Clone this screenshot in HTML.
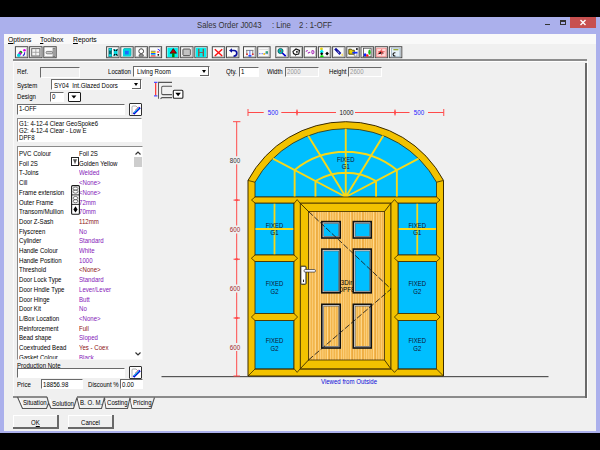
<!DOCTYPE html>
<html><head><meta charset="utf-8">
<style>
*{margin:0;padding:0;box-sizing:border-box}
html,body{width:600px;height:450px;overflow:hidden;background:#000}
body{position:relative;font-family:"Liberation Sans",sans-serif;font-size:7.5px;color:#000}
.a{position:absolute}
.t{position:absolute;white-space:nowrap;line-height:1;margin-top:-0.7px;transform:scaleX(0.81);transform-origin:0 0}
.sunk{position:absolute;background:#fff;border-top:1.3px solid #6a6a6a;border-left:1.3px solid #6a6a6a;border-right:1px solid #fff;border-bottom:1px solid #fff}
.dis{background:#f0f0f0}
.dd{position:absolute;background:#fcfcfc;border-right:1.5px solid #606060;border-bottom:1.5px solid #606060}
.dd:after{content:"";position:absolute;left:50%;top:50%;margin-left:-2.5px;margin-top:-1px;border-left:2.2px solid transparent;border-right:2.2px solid transparent;border-top:3px solid #000}
.btn{position:absolute;background:#f0f0f0;border-right:2px solid #696969;border-bottom:2px solid #696969;box-shadow:inset 1px 1px 0 #fff}
.pu{color:#8418b8}
.rd{color:#8c1414}
</style></head><body>
<div class="a" style="left:0;top:17px;width:600px;height:416px;background:#abb0ec"></div>
<div class="t" style="left:196.5px;top:22px;font-size:8.6px;color:#333;transform:scaleX(0.9)">Sales Order J0043</div>
<div class="t" style="left:272px;top:22px;font-size:8.6px;color:#333;transform:scaleX(0.9)">: Line</div>
<div class="t" style="left:298.5px;top:22px;font-size:8.6px;color:#333;transform:scaleX(0.9)">2 : 1-OFF</div>
<div class="a" style="left:545px;top:24px;width:5px;height:1px;background:#333"></div>
<div class="a" style="left:560px;top:20px;width:6px;height:5px;border:1px solid #333;border-top-width:2px"></div>
<div class="a" style="left:570px;top:17px;width:26px;height:11px;background:#c75050"></div>
<svg class="a" style="left:570px;top:17px" width="26" height="11"><path d="M10.5,3 L15.5,8 M15.5,3 L10.5,8" stroke="#fff" stroke-width="1.4"/></svg>
<div class="a" style="left:4px;top:34px;width:592px;height:397px;background:#f0f0f0"></div>
<div class="a" style="left:4px;top:34px;width:592px;height:10px;background:#f9f9f9"></div>
<div class="t" style="left:8px;top:37px;transform:scaleX(0.9)"><u>O</u>ptions</div>
<div class="t" style="left:40px;top:37px;transform:scaleX(0.9)"><u>T</u>oolbox</div>
<div class="t" style="left:72.5px;top:37px;transform:scaleX(0.9)"><u>R</u>eports</div>
<div class="a" style="left:13px;top:59px;width:574px;height:2px;background:#8c8c8c"></div>
<div class="a" style="left:13px;top:61px;width:572px;height:1px;background:#fff"></div>
<div class="a" style="left:13px;top:61px;width:1px;height:336px;background:#fafafa"></div>
<div class="a" style="left:585px;top:63px;width:2px;height:335px;background:#6a6a6a"></div>
<div class="a" style="left:587px;top:61px;width:1px;height:338px;background:#fff"></div>
<svg class="a" style="left:0;top:0" width="600" height="62"><rect x="15.40" y="46.7" width="12.4" height="11" fill="#fbfbfb" stroke="#4a4a4a" stroke-width="1"/><path d="M16.40,56.7 H26.80 V47.7" stroke="#a8a8a8" stroke-width="0.8" fill="none"/><rect x="29.60" y="46.7" width="12.4" height="11" fill="#fbfbfb" stroke="#4a4a4a" stroke-width="1"/><path d="M30.60,56.7 H41.00 V47.7" stroke="#a8a8a8" stroke-width="0.8" fill="none"/><rect x="43.80" y="46.7" width="12.4" height="11" fill="#fbfbfb" stroke="#4a4a4a" stroke-width="1"/><path d="M44.80,56.7 H55.20 V47.7" stroke="#a8a8a8" stroke-width="0.8" fill="none"/><rect x="106.60" y="46.7" width="12.4" height="11" fill="#fbfbfb" stroke="#4a4a4a" stroke-width="1"/><path d="M107.60,56.7 H118.00 V47.7" stroke="#a8a8a8" stroke-width="0.8" fill="none"/><rect x="120.80" y="46.7" width="12.4" height="11" fill="#fbfbfb" stroke="#4a4a4a" stroke-width="1"/><path d="M121.80,56.7 H132.20 V47.7" stroke="#a8a8a8" stroke-width="0.8" fill="none"/><rect x="135.00" y="46.7" width="12.4" height="11" fill="#fbfbfb" stroke="#4a4a4a" stroke-width="1"/><path d="M136.00,56.7 H146.40 V47.7" stroke="#a8a8a8" stroke-width="0.8" fill="none"/><rect x="149.20" y="46.7" width="12.4" height="11" fill="#fbfbfb" stroke="#4a4a4a" stroke-width="1"/><path d="M150.20,56.7 H160.60 V47.7" stroke="#a8a8a8" stroke-width="0.8" fill="none"/><rect x="166.40" y="46.7" width="12.4" height="11" fill="#fbfbfb" stroke="#4a4a4a" stroke-width="1"/><path d="M167.40,56.7 H177.80 V47.7" stroke="#a8a8a8" stroke-width="0.8" fill="none"/><rect x="180.60" y="46.7" width="12.4" height="11" fill="#fbfbfb" stroke="#4a4a4a" stroke-width="1"/><path d="M181.60,56.7 H192.00 V47.7" stroke="#a8a8a8" stroke-width="0.8" fill="none"/><rect x="194.80" y="46.7" width="12.4" height="11" fill="#fbfbfb" stroke="#4a4a4a" stroke-width="1"/><path d="M195.80,56.7 H206.20 V47.7" stroke="#a8a8a8" stroke-width="0.8" fill="none"/><rect x="212.30" y="46.7" width="12.4" height="11" fill="#fbfbfb" stroke="#4a4a4a" stroke-width="1"/><path d="M213.30,56.7 H223.70 V47.7" stroke="#a8a8a8" stroke-width="0.8" fill="none"/><rect x="226.50" y="46.7" width="12.4" height="11" fill="#fbfbfb" stroke="#4a4a4a" stroke-width="1"/><path d="M227.50,56.7 H237.90 V47.7" stroke="#a8a8a8" stroke-width="0.8" fill="none"/><rect x="243.50" y="46.7" width="12.4" height="11" fill="#fbfbfb" stroke="#4a4a4a" stroke-width="1"/><path d="M244.50,56.7 H254.90 V47.7" stroke="#a8a8a8" stroke-width="0.8" fill="none"/><rect x="257.70" y="46.7" width="12.4" height="11" fill="#fbfbfb" stroke="#4a4a4a" stroke-width="1"/><path d="M258.70,56.7 H269.10 V47.7" stroke="#a8a8a8" stroke-width="0.8" fill="none"/><rect x="275.80" y="46.7" width="12.4" height="11" fill="#fbfbfb" stroke="#4a4a4a" stroke-width="1"/><path d="M276.80,56.7 H287.20 V47.7" stroke="#a8a8a8" stroke-width="0.8" fill="none"/><rect x="290.00" y="46.7" width="12.4" height="11" fill="#fbfbfb" stroke="#4a4a4a" stroke-width="1"/><path d="M291.00,56.7 H301.40 V47.7" stroke="#a8a8a8" stroke-width="0.8" fill="none"/><rect x="304.20" y="46.7" width="12.4" height="11" fill="#fbfbfb" stroke="#4a4a4a" stroke-width="1"/><path d="M305.20,56.7 H315.60 V47.7" stroke="#a8a8a8" stroke-width="0.8" fill="none"/><rect x="318.40" y="46.7" width="12.4" height="11" fill="#fbfbfb" stroke="#4a4a4a" stroke-width="1"/><path d="M319.40,56.7 H329.80 V47.7" stroke="#a8a8a8" stroke-width="0.8" fill="none"/><rect x="332.60" y="46.7" width="12.4" height="11" fill="#fbfbfb" stroke="#4a4a4a" stroke-width="1"/><path d="M333.60,56.7 H344.00 V47.7" stroke="#a8a8a8" stroke-width="0.8" fill="none"/><rect x="346.80" y="46.7" width="12.4" height="11" fill="#fbfbfb" stroke="#4a4a4a" stroke-width="1"/><path d="M347.80,56.7 H358.20 V47.7" stroke="#a8a8a8" stroke-width="0.8" fill="none"/><rect x="361.00" y="46.7" width="12.4" height="11" fill="#fbfbfb" stroke="#4a4a4a" stroke-width="1"/><path d="M362.00,56.7 H372.40 V47.7" stroke="#a8a8a8" stroke-width="0.8" fill="none"/><rect x="375.20" y="46.7" width="12.4" height="11" fill="#fbfbfb" stroke="#4a4a4a" stroke-width="1"/><path d="M376.20,56.7 H386.60 V47.7" stroke="#a8a8a8" stroke-width="0.8" fill="none"/><rect x="389.40" y="46.7" width="12.4" height="11" fill="#fbfbfb" stroke="#4a4a4a" stroke-width="1"/><path d="M390.40,56.7 H400.80 V47.7" stroke="#a8a8a8" stroke-width="0.8" fill="none"/><g transform="translate(14.9,46.2)"><circle cx="5.8" cy="6" r="1.5" fill="#00a000"/><circle cx="5" cy="7.4" r="1.6" fill="#d000d0"/><circle cx="3.8" cy="9" r="1.7" fill="#00d8e8"/><circle cx="9.6" cy="4" r="1.3" fill="#e000e0"/><path d="M9.8,6 Q10,8.5 8,9.5" stroke="#2828d0" stroke-width="1.1" fill="none"/></g><g transform="translate(29.1,46.2)"><rect x="2.6" y="2.4" width="8.2" height="7.4" fill="#f4f4f4" stroke="#6a6a6a" stroke-width="1"/><path d="M6.7,3 V9.3 M3.2,6.1 H10.3" stroke="#9a9a9a" stroke-width="0.8"/></g><g transform="translate(43.3,46.2)"><rect x="2.8" y="5.2" width="6.4" height="2.4" rx="1" fill="#d0d0d0" stroke="#6a6a6a" stroke-width="0.8"/><rect x="9.8" y="2" width="1.8" height="8.5" fill="#cfcfcf" stroke="#6a6a6a" stroke-width="0.8"/></g><g transform="translate(106.1,46.2)"><rect x="2.4" y="1.8" width="3.4" height="8.8" fill="#006a70"/><circle cx="4.1" cy="3.3" r="1.3" fill="#00e0e8"/><circle cx="4.1" cy="9" r="1.3" fill="#00e0e8"/><rect x="7.6" y="3.2" width="3.8" height="6.2" fill="#00d8e0"/><path d="M7.6,3.2 L9,4.6 M11.4,3.2 L10,4.6 M7.6,9.4 L9,8 M11.4,9.4 L10,8" stroke="#000" stroke-width="1.2"/></g><g transform="translate(120.3,46.2)"><rect x="2.6" y="2.4" width="8" height="8" rx="1.2" fill="#00d8dc"/><rect x="4.6" y="4.6" width="3.8" height="3.6" fill="#1a6cff"/><path d="M3.6,2.4 H10.6 V9.4" stroke="#00a8a8" stroke-width="0.8" fill="none"/></g><g transform="translate(134.5,46.2)"><circle cx="6.7" cy="5" r="2.4" fill="#fff" stroke="#3a3a3a" stroke-width="0.9"/><path d="M6.7,1.6 V2.4" stroke="#666" stroke-width="0.8"/><path d="M4.6,8.6 Q6.7,7.6 8.8,8.6 V10 H4.6 Z" fill="#aaa" stroke="#444" stroke-width="0.7"/></g><g transform="translate(148.7,46.2)"><rect x="2.2" y="4.6" width="4.6" height="0.9" fill="#555"/><rect x="2.2" y="5.5" width="4.6" height="1.3" fill="#f0e000"/><rect x="2.2" y="6.8" width="4.6" height="1.2" fill="#2050ff"/><rect x="2.2" y="8" width="4.6" height="1.1" fill="#00c8f0"/><rect x="2.2" y="9.1" width="4.6" height="1.2" fill="#ff4040"/><path d="M8.2,5.8 H10.6" stroke="#ff3030" stroke-width="1.3"/><path d="M9,3 Q11.5,3.5 11,5" stroke="#4040ff" stroke-width="1" fill="none"/><circle cx="9.6" cy="8.6" r="0.9" fill="#000"/></g><g transform="translate(165.9,46.2)"><rect x="1.5" y="1.5" width="10.4" height="9.5" fill="#00f0f0"/><path d="M7.4,2.4 L10.6,7 H4.2 Z" fill="#c00000" stroke="#300" stroke-width="0.7"/><rect x="6.2" y="7" width="2.4" height="4" fill="#008000"/></g><g transform="translate(180.1,46.2)"><rect x="2.8" y="2.8" width="7.4" height="6.6" rx="0.8" fill="#bdbdbd" stroke="#444" stroke-width="0.9"/><path d="M5,3.5 V8.8 M7,3.5 V8.8 M9,3.5 V8.8" stroke="#d0d0d0" stroke-width="0.5"/></g><g transform="translate(194.3,46.2)"><rect x="1.5" y="1.5" width="10.4" height="9.5" fill="#00f0f0"/><path d="M4.5,2.5 V10.2 M9,2.5 V10.2" stroke="#a04030" stroke-width="1.2"/><path d="M4.5,6.3 H9" stroke="#806060" stroke-width="1"/></g><g transform="translate(211.8,46.2)"><path d="M3,3 L10.4,9.8 M10.4,3 L3,9.8" stroke="#ff1010" stroke-width="1.4"/></g><g transform="translate(226,46.2)"><path d="M5.5,4.3 H8 Q10.8,4.3 10.8,7 Q10.8,9.8 7.5,10" stroke="#0a10a0" stroke-width="1.6" fill="none"/><path d="M3,4.3 L6,2 V6.6 Z" fill="#0a10a0"/></g><g transform="translate(243,46.2)"><path d="M3,4.2 H10.4 M3.8,4.2 V7.6 M9.8,4.2 V7.6" stroke="#777" stroke-width="0.9"/><path d="M6.9,4.2 V9.2" stroke="#4060ff" stroke-width="0.9"/><circle cx="4" cy="8" r="1" fill="#d03030"/><circle cx="9.8" cy="8" r="1" fill="#d03030"/><ellipse cx="6.9" cy="9.6" rx="1.8" ry="0.9" fill="#2040ff"/></g><g transform="translate(257.2,46.2)"><path d="M2,3.2 H11" stroke="#dcdcdc" stroke-width="1"/><path d="M1.8,7.5 H11" stroke="#6070ff" stroke-width="1" stroke-dasharray="1.5 1"/><circle cx="7" cy="7.8" r="1.1" fill="#f0c020"/><rect x="8.4" y="5" width="2.4" height="2.4" fill="#30a080"/></g><g transform="translate(275.3,46.2)"><circle cx="5.2" cy="4.8" r="2.6" fill="#00c0c0" stroke="#0a4040" stroke-width="0.7"/><circle cx="5.2" cy="4.8" r="0.8" fill="#d02020"/><path d="M7,6.8 L10.4,10" stroke="#0000d0" stroke-width="1.7"/></g><g transform="translate(289.5,46.2)"><path d="M3.5,5.2 L6.5,2.8 L10,4.2 L9.2,7.8 L6,8.4 L4,7.4 Z" fill="#fff" stroke="#111" stroke-width="1.1"/><path d="M6.5,4.5 L9,5.5 L7,7" fill="#111"/><path d="M6,8.4 V10" stroke="#666" stroke-width="0.9"/></g><g transform="translate(303.7,46.2)"><path d="M2.2,5.5 Q3.3,3.8 4,4.8 M4.2,7.2 Q5.5,5.6 6.5,6.4 M8,5 Q9,4 10,5 Q10.8,7 9,7.6 Q8,7 8,5" stroke="#b040c0" stroke-width="1.1" fill="none"/></g><g transform="translate(317.9,46.2)"><ellipse cx="3.6" cy="2.8" rx="1.4" ry="1.4" fill="#f0d000"/><path d="M3.8,3 L5.8,5.5 L3.8,8 L1.8,5.5 Z" fill="#00e8f0"/><path d="M3.8,6 L5.4,7.6 L3.8,9.2 L2.2,7.6 Z" fill="#000"/><ellipse cx="4" cy="10" rx="1.8" ry="1" fill="#00e000"/><path d="M9.2,5.6 L11,7.4 L9.2,9.2 L7.4,7.4 Z" fill="#000"/></g><g transform="translate(332.1,46.2)"><path d="M3,2.5 L8.3,7.8" stroke="#1010a0" stroke-width="2.6"/><path d="M5.5,5.2 L7.2,6.8" stroke="#fff" stroke-width="0.7"/><path d="M8.5,8.8 L10.8,7 L11,10.2 Z" fill="#f8e070"/></g><g transform="translate(346.3,46.2)"><path d="M2.5,3 H5 L6,4 H8 V8 H2.5 Z" fill="#e8d000" stroke="#302800" stroke-width="0.8"/><rect x="6" y="5.6" width="5.2" height="1.8" fill="#1030ff"/><circle cx="10.6" cy="2.8" r="0.9" fill="#000"/><path d="M8,8 V10 H10.5 V8" stroke="#888" stroke-width="0.8" fill="none"/></g><g transform="translate(360.5,46.2)"><rect x="3" y="2" width="7.6" height="8.6" fill="#fff" stroke="#444" stroke-width="0.8"/><ellipse cx="4.6" cy="8.6" rx="1.4" ry="1.6" fill="#1020ff"/><ellipse cx="6.8" cy="9.2" rx="1.2" ry="1.2" fill="#ff1010"/><ellipse cx="9" cy="6" rx="1.2" ry="2.6" fill="#10c010"/></g><g transform="translate(374.7,46.2)"><rect x="2" y="2" width="9.4" height="8.6" fill="#ffd8d8" stroke="#f08080" stroke-width="0.8"/><path d="M3,8 L6,4.5 L9,7 M7,3 V9 M3.5,5.5 H10" stroke="#e85050" stroke-width="0.9"/></g><g transform="translate(388.9,46.2)"><rect x="2.5" y="1.8" width="8.6" height="8.8" fill="#e4f0f8" stroke="#98b0c0" stroke-width="0.8"/><path d="M4.5,3.5 H9.5" stroke="#90a020" stroke-width="1.2"/><path d="M6.5,6.5 Q4,6.3 4.2,8.4 Q4.5,10 6.5,9.8" stroke="#111" stroke-width="1.1" fill="none"/></g></svg>

<div class="t" style="left:17px;top:68.5px">Ref.</div>
<div class="sunk dis" style="left:40px;top:67px;width:40px;height:11px"></div>
<div class="t" style="left:108px;top:68.5px">Location</div>
<div class="sunk" style="left:133px;top:66px;width:77px;height:11px"></div>
<div class="t" style="left:137px;top:68.5px">Living Room</div>
<div class="dd" style="left:200px;top:67px;width:9px;height:9px"></div>
<div class="t" style="left:226px;top:68.5px">Qty.</div>
<div class="sunk" style="left:239px;top:67px;width:20px;height:10px"></div>
<div class="t" style="left:241px;top:68.5px">1</div>
<div class="t" style="left:267px;top:68.5px">Width</div>
<div class="sunk dis" style="left:285px;top:67px;width:34px;height:10px"></div>
<div class="t" style="left:287px;top:68.5px;color:#9a9a9a">2000</div>
<div class="t" style="left:329px;top:68.5px">Height</div>
<div class="sunk dis" style="left:348px;top:67px;width:34px;height:10px"></div>
<div class="t" style="left:350px;top:68.5px;color:#9a9a9a">2600</div>
<div class="t" style="left:17px;top:82.5px">System</div>
<div class="sunk" style="left:51px;top:79px;width:91px;height:11px"></div>
<div class="t" style="left:54px;top:83px">SY04 &nbsp;Int.Glazed Doors</div>
<div class="dd" style="left:132px;top:80px;width:9px;height:9px"></div>
<div class="t" style="left:17px;top:93.5px">Design</div>
<div class="sunk" style="left:50px;top:92px;width:14px;height:10px"></div>
<div class="t" style="left:52px;top:93.5px">0</div>
<div class="a" style="left:68.3px;top:91.7px;width:12.4px;height:10.4px;border:1.4px solid #1a1a1a;border-radius:1px;background:#fff"><svg class="a" style="left:0;top:0" width="10" height="8"><path d="M2.4,2.6 H7.4 L4.9,5.6 Z" fill="#000"/></svg></div>
<div class="sunk" style="left:17px;top:104px;width:108px;height:11px"></div>
<div class="t" style="left:19px;top:106px">1-OFF</div>
<div class="a" style="left:129px;top:103px;width:12.5px;height:13px;border:1px solid #303030;border-radius:1px;background:#fff"><svg class="a" style="left:0;top:0" width="12" height="12"><path d="M2,10.5 V3 Q2,2 3,2 H6 L8,4" stroke="#999" stroke-width="0.8" fill="none"/><path d="M3.5,10 L10,3.5" stroke="#0000e0" stroke-width="2.2"/><path d="M4,9 L9,4" stroke="#00c8c8" stroke-width="1"/><path d="M8.5,2.8 L5,6" stroke="#e07070" stroke-width="0.6"/></svg></div>
<div class="sunk" style="left:17px;top:118.3px;width:125px;height:24px;border-color:#8a8a8a #fff #fff #8a8a8a;border-width:1px"></div>
<div class="t" style="left:19px;top:120.4px;line-height:7.2px">G1: 4-12-4 Clear GeoSpoke6<br>G2: 4-12-4 Clear - Low E<br>DPF8</div>
<div class="sunk" style="left:17px;top:146.2px;width:126px;height:213.5px;overflow:hidden;border-color:#8a8a8a #f8f8f8 #f8f8f8 #8a8a8a;border-width:1px"><div class="t" style="left:0.7px;top:3.50px">PVC Colour</div><div class="t " style="left:61.3px;top:3.50px">Foil 2S</div><div class="t" style="left:0.7px;top:13.20px">Foil 2S</div><div class="t " style="left:61.3px;top:13.20px">Golden Yellow</div><div class="t" style="left:0.7px;top:22.90px">T-Joins</div><div class="t pu" style="left:61.3px;top:22.90px">Welded</div><div class="t" style="left:0.7px;top:32.60px">Cill</div><div class="t pu" style="left:61.3px;top:32.60px">&lt;None&gt;</div><div class="t" style="left:0.7px;top:42.30px">Frame extension</div><div class="t pu" style="left:61.3px;top:42.30px">&lt;None&gt;</div><div class="t" style="left:0.7px;top:52.00px">Outer Frame</div><div class="t pu" style="left:61.3px;top:52.00px">72mm</div><div class="t" style="left:0.7px;top:61.70px">Transom/Mullion</div><div class="t pu" style="left:61.3px;top:61.70px">70mm</div><div class="t" style="left:0.7px;top:71.40px">Door Z-Sash</div><div class="t rd" style="left:61.3px;top:71.40px">112mm</div><div class="t" style="left:0.7px;top:81.10px">Flyscreen</div><div class="t pu" style="left:61.3px;top:81.10px">No</div><div class="t" style="left:0.7px;top:90.80px">Cylinder</div><div class="t pu" style="left:61.3px;top:90.80px">Standard</div><div class="t" style="left:0.7px;top:100.50px">Handle Colour</div><div class="t pu" style="left:61.3px;top:100.50px">White</div><div class="t" style="left:0.7px;top:110.20px">Handle Position</div><div class="t pu" style="left:61.3px;top:110.20px">1000</div><div class="t" style="left:0.7px;top:119.90px">Threshold</div><div class="t rd" style="left:61.3px;top:119.90px">&lt;None&gt;</div><div class="t" style="left:0.7px;top:129.60px">Door Lock Type</div><div class="t pu" style="left:61.3px;top:129.60px">Standard</div><div class="t" style="left:0.7px;top:139.30px">Door Hndle Type</div><div class="t pu" style="left:61.3px;top:139.30px">Lever/Lever</div><div class="t" style="left:0.7px;top:149.00px">Door Hinge</div><div class="t pu" style="left:61.3px;top:149.00px">Butt</div><div class="t" style="left:0.7px;top:158.70px">Door Kit</div><div class="t pu" style="left:61.3px;top:158.70px">No</div><div class="t" style="left:0.7px;top:168.40px">L/Box Location</div><div class="t pu" style="left:61.3px;top:168.40px">&lt;None&gt;</div><div class="t" style="left:0.7px;top:178.10px">Reinforcement</div><div class="t rd" style="left:61.3px;top:178.10px">Full</div><div class="t" style="left:0.7px;top:187.80px">Bead shape</div><div class="t pu" style="left:61.3px;top:187.80px">Sloped</div><div class="t" style="left:0.7px;top:197.50px">Coextruded Bead</div><div class="t rd" style="left:61.3px;top:197.50px">Yes - Coex</div><div class="t" style="left:0.7px;top:207.20px">Gasket Colour</div><div class="t pu" style="left:61.3px;top:207.20px">Black</div><div class="a" style="left:53px;top:9.5px;width:8px;height:9.5px;border:1px solid #222;background:#fff"><div class="a" style="left:1px;top:1.5px;width:4px;height:5px;background:#555;clip-path:polygon(0 0,100% 0,50% 100%)"></div></div><svg class="a" style="left:53px;top:38px" width="9" height="30"><rect x="0.6" y="0.6" width="7.8" height="28.6" rx="1" fill="#fff" stroke="#1a1a1a" stroke-width="1.1"/><path d="M0.6,9.9 H8.4 M0.6,19.4 H8.4" stroke="#1a1a1a" stroke-width="0.9"/><ellipse cx="4.5" cy="3.6" rx="2.4" ry="1.6" fill="none" stroke="#555" stroke-width="0.8"/><ellipse cx="4.5" cy="6.6" rx="2.4" ry="1.6" fill="none" stroke="#555" stroke-width="0.8"/><ellipse cx="4.5" cy="13.1" rx="2.4" ry="1.6" fill="none" stroke="#555" stroke-width="0.8"/><ellipse cx="4.5" cy="16.2" rx="2.4" ry="1.6" fill="none" stroke="#555" stroke-width="0.8"/><path d="M4.5,21.3 L6.6,24.4 L4.5,27.5 L2.4,24.4 Z" fill="#000"/></svg><div class="a" style="left:115px;top:0;width:10px;height:212px;background:#fff"></div><div class="a" style="left:116px;top:10px;width:9px;height:10px;background:#cdcdcd"></div><svg class="a" style="left:115px;top:2px" width="10" height="8"><path d="M2.5 5.5 L5 3 L7.5 5.5" stroke="#333" stroke-width="1.2" fill="none"/></svg><svg class="a" style="left:115px;top:203px" width="10" height="8"><path d="M2.5 2.5 L5 5 L7.5 2.5" stroke="#333" stroke-width="1.2" fill="none"/></svg></div>
<div class="t" style="left:17px;top:362.5px"><u>Production Note</u></div>
<div class="sunk" style="left:17px;top:368px;width:108px;height:10px"></div>
<div class="a" style="left:128.5px;top:366px;width:13px;height:12.5px;border:1px solid #303030;border-radius:1px;background:#fff"><svg class="a" style="left:0;top:0" width="12" height="12"><path d="M2,10.5 V3 Q2,2 3,2 H6 L8,4" stroke="#999" stroke-width="0.8" fill="none"/><path d="M3.5,10 L10,3.5" stroke="#0000e0" stroke-width="2.2"/><path d="M4,9 L9,4" stroke="#00c8c8" stroke-width="1"/><path d="M8.5,2.8 L5,6" stroke="#e07070" stroke-width="0.6"/></svg></div>
<div class="t" style="left:17px;top:382px">Price</div>
<div class="sunk" style="left:41px;top:379px;width:42px;height:10px"></div>
<div class="t" style="left:43px;top:382px">18856.98</div>
<div class="t" style="left:88px;top:382px">Discount %</div>
<div class="sunk" style="left:120px;top:379px;width:23px;height:10px"></div>
<div class="t" style="left:122px;top:382px">0.00</div>

<svg class="a" style="left:0;top:0" width="600" height="450">
<path d="M13,396.9 H47 M77,396.9 H587" stroke="#6a6a6a" stroke-width="1.5"/>
<path d="M17.5,397 L22.5,408.5 H46.5 L48.6,403 M48.6,403 L51,408.5 H73.5 L77,397.5 M77,397.5 L79.5,408.5 H101.5 L104.5,397.5 L106,408.5 H127.5 L130,397.5 L132,408.5 H151 L154.5,397.5" stroke="#555" stroke-width="1.1" fill="none"/>
<path d="M48.6,403 L47,397" stroke="#555" stroke-width="1.1"/>
<path d="M19.5,398.5 L23.5,407.5 M50,399 L52,407.5 M78.5,399 L81,407.5 M105.5,400 L107,407.5 M131,400 L133,407.5" stroke="#fff" stroke-width="0.9"/>
</svg>
<div class="t" style="left:22.5px;top:400px">Situation</div>
<div class="t" style="left:52px;top:400.5px">Solution</div>
<div class="t" style="left:79.5px;top:400px">B. O. M.</div>
<div class="t" style="left:106.5px;top:400px">Costing</div>
<div class="t" style="left:132.5px;top:400px">Pricing</div>
<div class="btn" style="left:13px;top:415px;width:46px;height:14px"></div>
<div class="t" style="left:31px;top:420px">O<u>K</u></div>
<div class="btn" style="left:68px;top:415px;width:46px;height:14px"></div>
<div class="t" style="left:81px;top:420px">Cancel</div>

<svg class="a" style="left:0;top:0" width="600" height="450"><defs><pattern id="wood" x="0" y="0" width="23" height="60" patternUnits="userSpaceOnUse"><rect width="23" height="60" fill="#f3b64c"/><rect x="0.5" width="0.8" height="60" fill="#ffd98e"/><rect x="2.8" width="0.6" height="60" fill="#ffd98e"/><rect x="5" width="1" height="60" fill="#ffd98e"/><rect x="8.2" width="0.7" height="60" fill="#ffd98e"/><rect x="10.5" width="0.9" height="60" fill="#ffd98e"/><rect x="13" width="0.6" height="60" fill="#ffd98e"/><rect x="15.8" width="1.1" height="60" fill="#ffd98e"/><rect x="19" width="0.7" height="60" fill="#ffd98e"/><rect x="21.3" width="0.8" height="60" fill="#ffd98e"/><rect x="7" width="0.8" height="60" fill="#e9a63e"/><rect x="17.5" width="0.8" height="60" fill="#e9a63e"/></pattern></defs><rect x="161.5" y="376" width="387" height="1.2" fill="#555"/><path d="M248,376 V180.44 A110.7,110.7 0 0 1 443.5,180.44 V376 Z" fill="#f2c200" stroke="#3a2a00" stroke-width="1"/><path d="M255,197 V182.22 A103.7,103.7 0 0 1 436.5,182.22 V197 Z" fill="#00bfff" stroke="#3a2a00" stroke-width="0.8"/><path d="M248,180.44 L255,182.22 M443.5,180.44 L436.5,182.22" stroke="#3a2a00" stroke-width="0.8"/><path d="M345.75,197 L272.94,158.56 M345.75,197 L308.25,135.72 M345.75,197 L345.75,128.70 M345.75,197 L383.25,135.72 M345.75,197 L418.56,158.56 M294.64,170.01 A80.65,80.65 0 0 1 396.86,170.01 M294.64,170.01 V197 M396.86,170.01 V197 M315.46,181.01 A59.65,59.65 0 0 1 376.04,181.01 M315.46,181.01 V197 M376.04,181.01 V197" stroke="#f6d81a" stroke-width="1.9" fill="none"/><rect x="255" y="203" width="39" height="52" fill="#00bfff" stroke="#3a2a00" stroke-width="0.8"/><rect x="255" y="261.5" width="39" height="52.0" fill="#00bfff" stroke="#3a2a00" stroke-width="0.8"/><rect x="255" y="320.5" width="39" height="48.5" fill="#00bfff" stroke="#3a2a00" stroke-width="0.8"/><path d="M274.5,203.5 V254.5 M255.5,229 H293.5" stroke="#f6d81a" stroke-width="1.8"/><rect x="398" y="203" width="38.5" height="52" fill="#00bfff" stroke="#3a2a00" stroke-width="0.8"/><rect x="398" y="261.5" width="38.5" height="52.0" fill="#00bfff" stroke="#3a2a00" stroke-width="0.8"/><rect x="398" y="320.5" width="38.5" height="48.5" fill="#00bfff" stroke="#3a2a00" stroke-width="0.8"/><path d="M417.25,203.5 V254.5 M398.5,229 H436.0" stroke="#f6d81a" stroke-width="1.8"/><path d="M300,203 H391 V369 H300 Z" fill="#f2c200" stroke="#3a2a00" stroke-width="0.8"/><rect x="308.5" y="211.5" width="76" height="148.5" fill="url(#wood)" stroke="#3a2a00" stroke-width="0.8"/><path d="M300,203 L308.5,211.5 M391,203 L384.5,211.5 M300,369 L308.5,360 M391,369 L384.5,360" stroke="#3a2a00" stroke-width="0.9"/><path d="M251.5,200 L255,197 H436.5 L440,200 L436.5,203 H255 Z" fill="#f2c200" stroke="#3a2a00" stroke-width="0.8"/><path d="M248,376 L255,369 H436.5 L443.5,376" fill="none" stroke="#3a2a00" stroke-width="0.8"/><path d="M294,203 L297.15,199.6 L300.3,203 V369 L297.15,372.4 L294,369 Z" fill="#f2c200" stroke="none"/><path d="M294,203.5 L297.15,199.6 L300.3,203.5 M294,203 V369 M300.3,203 V369 M294,368.6 L297.15,372.4 L300.3,368.6" fill="none" stroke="#3a2a00" stroke-width="0.8"/><path d="M391,203 L394.5,199.6 L398,203 V369 L394.5,372.4 L391,369 Z" fill="#f2c200" stroke="none"/><path d="M391,203.5 L394.5,199.6 L398,203.5 M391,203 V369 M398,203 V369 M391,368.6 L394.5,372.4 L398,368.6" fill="none" stroke="#3a2a00" stroke-width="0.8"/><path d="M251.4,258.25 L255,255 H294 L297.6,258.25 L294,261.5 H255 Z" fill="#f2c200" stroke="#3a2a00" stroke-width="0.8"/><path d="M251.4,317.0 L255,313.5 H294 L297.6,317.0 L294,320.5 H255 Z" fill="#f2c200" stroke="#3a2a00" stroke-width="0.8"/><path d="M394.4,258.25 L398,255 H436.5 L440.1,258.25 L436.5,261.5 H398 Z" fill="#f2c200" stroke="#3a2a00" stroke-width="0.8"/><path d="M394.4,317.0 L398,313.5 H436.5 L440.1,317.0 L436.5,320.5 H398 Z" fill="#f2c200" stroke="#3a2a00" stroke-width="0.8"/><text transform="translate(346.5,284.6) scale(0.82,1)" font-size="7.6" text-anchor="middle" fill="#000" font-family="Liberation Sans" >3Dir</text><text transform="translate(346.5,292) scale(0.82,1)" font-size="7.6" text-anchor="middle" fill="#000" font-family="Liberation Sans" >DPF8</text><rect x="321" y="220.8" width="20" height="18.0" fill="#111"/><rect x="322.6" y="222.4" width="16.8" height="14.8" fill="#dcdcdc"/><rect x="323.4" y="223.20000000000002" width="15.6" height="13.6" fill="#666"/><rect x="324" y="223.8" width="14.4" height="12.2" fill="#00bfff"/><rect x="321" y="248.3" width="20" height="45.30000000000001" fill="#111"/><rect x="322.6" y="249.9" width="16.8" height="42.10000000000001" fill="#dcdcdc"/><rect x="323.4" y="250.70000000000002" width="15.6" height="40.90000000000001" fill="#666"/><rect x="324" y="251.3" width="14.4" height="39.500000000000014" fill="#00bfff"/><rect x="321" y="303.5" width="20" height="45.30000000000001" fill="#111"/><rect x="322.6" y="305.1" width="16.8" height="42.10000000000001" fill="#dcdcdc"/><rect x="323.4" y="305.9" width="15.6" height="40.90000000000001" fill="#666"/><rect x="324" y="306.5" width="14.4" height="39.500000000000014" fill="url(#wood)"/><rect x="352.5" y="220.8" width="19.5" height="18.0" fill="#111"/><rect x="354.1" y="222.4" width="16.3" height="14.8" fill="#dcdcdc"/><rect x="354.9" y="223.20000000000002" width="15.1" height="13.6" fill="#666"/><rect x="355.5" y="223.8" width="13.9" height="12.2" fill="#00bfff"/><rect x="352.5" y="248.3" width="19.5" height="45.30000000000001" fill="#111"/><rect x="354.1" y="249.9" width="16.3" height="42.10000000000001" fill="#dcdcdc"/><rect x="354.9" y="250.70000000000002" width="15.1" height="40.90000000000001" fill="#666"/><rect x="355.5" y="251.3" width="13.9" height="39.500000000000014" fill="#00bfff"/><rect x="352.5" y="303.5" width="19.5" height="45.30000000000001" fill="#111"/><rect x="354.1" y="305.1" width="16.3" height="42.10000000000001" fill="#dcdcdc"/><rect x="354.9" y="305.9" width="15.1" height="40.90000000000001" fill="#666"/><rect x="355.5" y="306.5" width="13.9" height="39.500000000000014" fill="url(#wood)"/><path d="M308.5,211.5 L391,289 L308.5,360" stroke="#1a1a1a" stroke-width="0.85" fill="none" stroke-dasharray="6 2"/><rect x="300.8" y="266.2" width="5.2" height="18" rx="0.8" fill="#fff" stroke="#1a1a1a" stroke-width="1"/><rect x="304" y="269.5" width="11.5" height="2.6" rx="1.2" fill="#f4f4ff" stroke="#333" stroke-width="0.7"/><rect x="303" y="279.6" width="1" height="2.4" fill="#222"/><text transform="translate(345.75,161.8) scale(0.88,1)" font-size="6.8" text-anchor="middle" fill="#101030" font-family="Liberation Sans" >FIXED</text><text transform="translate(345.75,169.2) scale(0.88,1)" font-size="6.8" text-anchor="middle" fill="#101030" font-family="Liberation Sans" >G1</text><text transform="translate(274.5,227.6) scale(0.88,1)" font-size="6.8" text-anchor="middle" fill="#101030" font-family="Liberation Sans" >FIXED</text><text transform="translate(274.5,235.2) scale(0.88,1)" font-size="6.8" text-anchor="middle" fill="#101030" font-family="Liberation Sans" >G1</text><text transform="translate(274.5,286.1) scale(0.88,1)" font-size="6.8" text-anchor="middle" fill="#101030" font-family="Liberation Sans" >FIXED</text><text transform="translate(274.5,293.7) scale(0.88,1)" font-size="6.8" text-anchor="middle" fill="#101030" font-family="Liberation Sans" >G2</text><text transform="translate(274.5,343.35) scale(0.88,1)" font-size="6.8" text-anchor="middle" fill="#101030" font-family="Liberation Sans" >FIXED</text><text transform="translate(274.5,350.95) scale(0.88,1)" font-size="6.8" text-anchor="middle" fill="#101030" font-family="Liberation Sans" >G2</text><text transform="translate(417.25,227.6) scale(0.88,1)" font-size="6.8" text-anchor="middle" fill="#101030" font-family="Liberation Sans" >FIXED</text><text transform="translate(417.25,235.2) scale(0.88,1)" font-size="6.8" text-anchor="middle" fill="#101030" font-family="Liberation Sans" >G1</text><text transform="translate(417.25,286.1) scale(0.88,1)" font-size="6.8" text-anchor="middle" fill="#101030" font-family="Liberation Sans" >FIXED</text><text transform="translate(417.25,293.7) scale(0.88,1)" font-size="6.8" text-anchor="middle" fill="#101030" font-family="Liberation Sans" >G2</text><text transform="translate(417.25,343.35) scale(0.88,1)" font-size="6.8" text-anchor="middle" fill="#101030" font-family="Liberation Sans" >FIXED</text><text transform="translate(417.25,350.95) scale(0.88,1)" font-size="6.8" text-anchor="middle" fill="#101030" font-family="Liberation Sans" >G2</text><path d="M248,112.5 H443.75 M248,109 V116 M297,109.5 V115.5 M395,109.5 V115.5 M443.75,109 V116" stroke="#ff4a4a" stroke-width="1"/><path d="M236.7,121.7 V376 M233,121.7 H240.4 M233.5,200.1 H240 M233.5,259.2 H240 M233.5,318 H240 M233.5,376 H240" stroke="#ff4a4a" stroke-width="1"/><path d="M297,110.0 L298.2,112.5 L297,115.0 L295.8,112.5 Z" fill="#ff4a4a"/><path d="M395,110.0 L396.2,112.5 L395,115.0 L393.8,112.5 Z" fill="#ff4a4a"/><path d="M234.2,200.1 L236.7,198.9 L239.2,200.1 L236.7,201.29999999999998 Z" fill="#ff4a4a"/><path d="M234.2,259.2 L236.7,258.0 L239.2,259.2 L236.7,260.4 Z" fill="#ff4a4a"/><path d="M234.2,318 L236.7,316.8 L239.2,318 L236.7,319.2 Z" fill="#ff4a4a"/><rect x="263.7" y="110" width="17.600000000000023" height="5" fill="#f0f0f0"/><rect x="336" y="110" width="19" height="5" fill="#f0f0f0"/><rect x="409.5" y="110" width="18.5" height="5" fill="#f0f0f0"/><rect x="235" y="156.3" width="4" height="8" fill="#f0f0f0"/><rect x="235" y="225.5" width="4" height="8" fill="#f0f0f0"/><rect x="235" y="284.5" width="4" height="8" fill="#f0f0f0"/><rect x="235" y="343" width="4" height="8" fill="#f0f0f0"/><text transform="translate(273,115.3) scale(0.82,1)" font-size="7.6" text-anchor="middle" fill="#2020ff" font-family="Liberation Sans" >500</text><text transform="translate(346.5,115.3) scale(0.82,1)" font-size="7.6" text-anchor="middle" fill="#111" font-family="Liberation Sans" >1000</text><text transform="translate(419,115.3) scale(0.82,1)" font-size="7.6" text-anchor="middle" fill="#2020ff" font-family="Liberation Sans" >500</text><text transform="translate(235,163.2) scale(0.82,1)" font-size="7.6" text-anchor="middle" fill="#333" font-family="Liberation Sans" >800</text><text transform="translate(235,232.4) scale(0.82,1)" font-size="7.6" text-anchor="middle" fill="#a02828" font-family="Liberation Sans" >600</text><text transform="translate(235,291.4) scale(0.82,1)" font-size="7.6" text-anchor="middle" fill="#a02828" font-family="Liberation Sans" >600</text><text transform="translate(235,349.9) scale(0.82,1)" font-size="7.6" text-anchor="middle" fill="#a02828" font-family="Liberation Sans" >600</text><text transform="translate(349,383.7) scale(0.82,1)" font-size="7.4" text-anchor="middle" fill="#0a0ad8" font-family="Liberation Sans" >Viewed from Outside</text><path d="M155.7,82.5 V95.7" stroke="#ff2020" stroke-width="1.1"/><path d="M154,82.3 H157.4 M154,95.8 H157.4" stroke="#5050ff" stroke-width="1.3"/><path d="M158.6,98.7 V82.4 H172 M172,86.2 H162.8 Q161.8,86.2 161.8,87.2 V93.5 Q161.8,94.6 162.8,94.6 H172 M172,97.6 H162 L160.5,98.8" stroke="#555" stroke-width="1.1" fill="none"/><path d="M159.6,98.7 V83.4 M162.8,87.2 V93.5" stroke="#fff" stroke-width="0.7" fill="none"/><rect x="173.3" y="90.3" width="9.6" height="8" rx="1" fill="#fff" stroke="#222" stroke-width="1.1"/><path d="M175.3,92.8 H180.9 L178.1,96.2 Z" fill="#000"/></svg>
</body></html>
